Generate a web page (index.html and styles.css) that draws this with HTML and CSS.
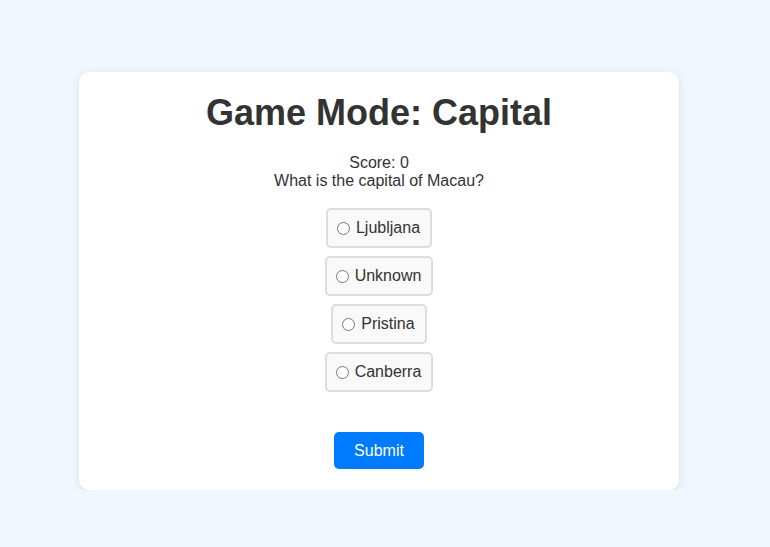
FILE: index.html
```html
<!DOCTYPE html>
<html>
<head>
<meta charset="utf-8">
<link rel="stylesheet" href="styles.css">
</head>
<body>
<div class="card">
  <h1 class="title">Game Mode: Capital</h1>
  <div class="score">Score: 0</div>
  <div class="question">What is the capital of Macau?</div>
  <div class="options">
    <label class="option"><input type="radio" name="ans" class="radio">Ljubljana</label>
    <label class="option"><input type="radio" name="ans" class="radio">Unknown</label>
    <label class="option"><input type="radio" name="ans" class="radio">Pristina</label>
    <label class="option"><input type="radio" name="ans" class="radio">Canberra</label>
  </div>
  <button class="submit">Submit</button>
</div>
</body>
</html>
```
FILE: styles.css
```css
html, body {
  margin: 0;
  padding: 0;
}
body {
  background: #f0f7ff;
  font-family: "Liberation Sans", Arial, sans-serif;
  color: #333;
  padding-top: 72px;
  padding-right: 12px;
}
.card {
  width: 600px;
  margin: 0 auto;
  box-sizing: border-box;
  background: #fff;
  border-radius: 10px;
  box-shadow: 0 2px 10px rgba(0, 0, 0, 0.1);
  padding: 20px 20px 21px;
  text-align: center;
}
.title {
  font-size: 36px;
  font-weight: bold;
  margin: 0 0 20px;
  line-height: 42px;
}
.score, .question {
  font-size: 16px;
  line-height: 18px;
}
.options {
  display: flex;
  flex-direction: column;
  align-items: center;
  gap: 8px;
  margin: 18px 0 40px;
}
.option {
  display: inline-flex;
  align-items: center;
  border: 2px solid #ddd;
  border-radius: 5px;
  background: #f9f9f9;
  padding: 9px 10px 9px 9px;
  font-size: 16px;
  line-height: 18px;
}
.radio {
  margin: 0 6px 0 0;
  width: 13px;
  height: 13px;
}
.submit {
  background: #007bff;
  color: #fff;
  border: none;
  border-radius: 5px;
  font-family: "Liberation Sans", Arial, sans-serif;
  font-size: 16px;
  padding: 10px 20px;
  line-height: 17px;
}
```
